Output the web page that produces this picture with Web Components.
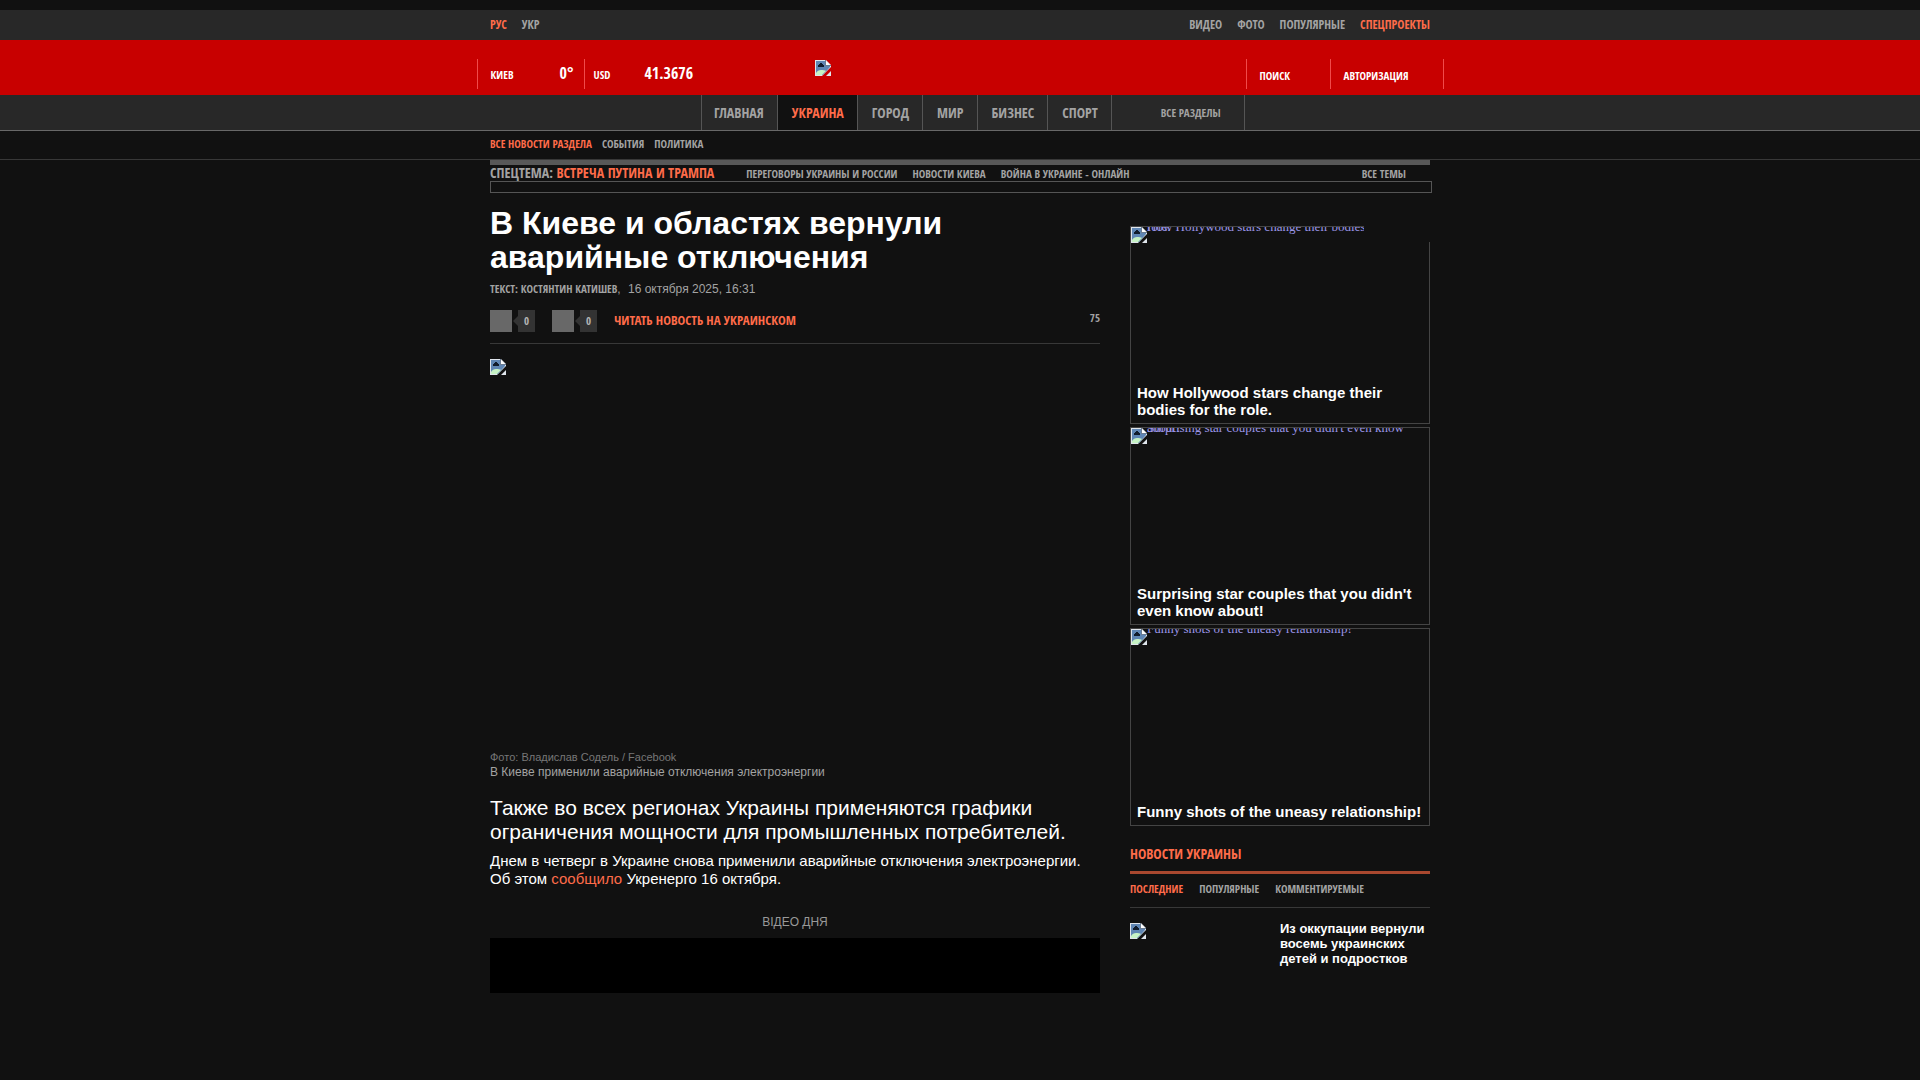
<!DOCTYPE html>
<html lang="ru">
<head>
<meta charset="utf-8">
<title>В Киеве и областях вернули аварийные отключения</title>
<style>
  html {
    --page: #111;
    --bar: #282828;
    --red: #c80000;
    --accent: #ff6c4a;
    --muted: #a3a3a3;
    --wrap: 940px;
    --narrow: "Open Sans Condensed", "OpenSans Condensed", "Noto Sans Condensed", "Liberation Sans Narrow", "Open Sans", sans-serif;
    background: var(--page);
    color: #fff;
  }
  body {
    margin: 0;
    padding-top: 10px;
    font: 15px/18px "Liberation Sans", Arial, sans-serif;
  }
  .columns {
    display: flex;
    gap: 30px;
    max-width: var(--wrap);
    margin: 0 auto;
  }
  news-article { flex: 1; }
  aside { width: 300px; padding-top: 33px; }
</style>
</head>
<body>

<!-- Broken image placeholder -->
<template id="broken-image">
  <style>
    :host { display: block; width: 16px; height: 16px; flex: none; }
    svg { display: block; }
  </style>
  <svg width="16" height="16" viewBox="0 0 16 16" aria-hidden="true">
    <path fill="#dfe5ec" d="M0 0h11l5 5v2L7 16H0z"/>
    <path fill="#5f86b4" d="M1 1h9v5h5v1l-7 8H1z"/>
    <path fill="#c6f2c4" d="M1 15v-2c1-2 3-3 5-3 2 0 4 0 5 1L7 15z"/>
    <path fill="#111c2c" d="M3 7V5h1V4h1V3h2v1h1v1h1v2z"/>
    <path fill="#fff" d="M11 1v4h4z"/>
    <path fill="#6b7c92" d="M10 0h1v5h5v1h-6z"/>
    <path fill="#dfe5ec" d="M16 11v5h-5z"/>
  </svg>
</template>

<!-- Top bar -->
<template id="top-bar">
  <style>
    :host { display: block; background: var(--bar); font: bold 12px/30px var(--narrow); }
    nav { display: flex; gap: 15px; max-width: var(--wrap); margin: 0 auto; }
    .push { margin-left: auto; }
    a { color: var(--muted); text-decoration: none; }
    .on { color: var(--accent); }
  </style>
  <nav>
    <a class="on" href="#ru">РУС</a>
    <a href="#uk">УКР</a>
    <a class="push" href="#video">ВИДЕО</a>
    <a href="#photo">ФОТО</a>
    <a href="#popular">ПОПУЛЯРНЫЕ</a>
    <a class="on" href="#special">СПЕЦПРОЕКТЫ</a>
  </nav>
</template>

<!-- Red header -->
<template id="site-header">
  <style>
    :host { display: block; background: var(--red); font: bold 11px/16px var(--narrow); }
    header {
      display: flex;
      max-width: 967px;
      height: 36px;
      margin: 0 auto;
      padding-top: 19px;
    }
    .box {
      box-sizing: border-box;
      display: flex;
      align-items: baseline;
      height: 30px;
      padding-top: 5px;
      border-left: 1px solid #f04a4a;
    }
    .weather { width: 107px; padding-left: 13px; padding-right: 10px; justify-content: space-between; }
    .rate { width: 231px; padding-left: 9px; gap: 34px; }
    .search { width: 84px; padding: 9px 0 0 13px; margin-left: auto; }
    .login { width: 114px; padding: 9px 0 0 13px; border-right: 1px solid #f04a4a; }
    b { font-size: 16px; line-height: 18px; }
    a, button { color: #fff; text-decoration: none; font: inherit; }
    button { border: 0; padding: 0; background: none; cursor: pointer; }
    .logo { padding-top: 1px; }
  </style>
  <header>
    <div class="box weather"><span>КИЕВ</span><b>0°</b></div>
    <div class="box rate"><span>USD</span><b>41.3676</b></div>
    <a class="logo" href="#home" aria-label="Главная"><broken-image></broken-image></a>
    <div class="box search"><button>ПОИСК</button></div>
    <div class="box login"><a href="#login">АВТОРИЗАЦИЯ</a></div>
  </header>
</template>

<!-- Sections -->
<template id="main-nav">
  <style>
    :host { display: block; background: var(--bar); border-bottom: 1px solid #686868; font: bold 14px/35px var(--narrow); }
    nav { display: flex; box-sizing: border-box; max-width: var(--wrap); margin: 0 auto; padding-left: 211px; }
    a { padding: 0 13px 0 14px; border-left: 1px solid #555; color: var(--muted); text-decoration: none; }
    a:first-child { padding-left: 12px; }
    .on { background: var(--page); color: var(--accent); }
    .all { padding: 0 23px 0 49px; border-right: 1px solid #555; font-size: 11px; }
  </style>
  <nav>
    <a href="#main">ГЛАВНАЯ</a>
    <a class="on" href="#ukraine">УКРАИНА</a>
    <a href="#city">ГОРОД</a>
    <a href="#world">МИР</a>
    <a href="#business">БИЗНЕС</a>
    <a href="#sport">СПОРТ</a>
    <a class="all" href="#all">ВСЕ РАЗДЕЛЫ</a>
  </nav>
</template>

<template id="sub-nav">
  <style>
    :host { display: block; padding-bottom: 2px; border-bottom: 1px solid #383838; font: bold 11px/26px var(--narrow); }
    nav { display: flex; gap: 10px; max-width: var(--wrap); margin: 0 auto; }
    a { color: var(--muted); text-decoration: none; }
    .on { color: var(--accent); }
  </style>
  <nav>
    <a class="on" href="#news">ВСЕ НОВОСТИ РАЗДЕЛА</a>
    <a href="#events">СОБЫТИЯ</a>
    <a href="#politics">ПОЛИТИКА</a>
  </nav>
</template>

<template id="topic-bar">
  <style>
    :host { display: block; max-width: var(--wrap); margin: 0 auto; font: bold 11px/18px var(--narrow); color: var(--muted); }
    nav { display: flex; gap: 15px; height: 16px; border-top: 5px solid #585858; padding-right: 24px; }
    .topic { font-size: 14px; line-height: 16px; margin-right: 17px; }
    .all { margin-left: auto; }
    a { color: inherit; text-decoration: none; }
    .topic a { color: var(--accent); }
    .frame { height: 10px; margin-right: -2px; border: 1px solid #555; }
  </style>
  <nav>
    <span class="topic">СПЕЦТЕМА: <a href="#topic">ВСТРЕЧА ПУТИНА И ТРАМПА</a></span>
    <a href="#talks">ПЕРЕГОВОРЫ УКРАИНЫ И РОССИИ</a>
    <a href="#kyiv">НОВОСТИ КИЕВА</a>
    <a href="#war">ВОЙНА В УКРАИНЕ - ОНЛАЙН</a>
    <a class="all" href="#topics">ВСЕ ТЕМЫ</a>
  </nav>
  <div class="frame"></div>
</template>

<!-- Share button with a counter -->
<template id="share-button">
  <style>
    :host { display: flex; align-items: center; width: 45px; height: 22px; font: bold 11px/22px var(--narrow); }
    button { width: 22px; height: 22px; border: 0; padding: 0; background: #686868; cursor: pointer; }
    i { margin-left: 1px; border: 5px solid transparent; border-left: 0; border-right-color: #333; }
    span { flex: 1; background: #333; color: #b5b5b5; text-align: center; }
  </style>
  <button aria-label="Поделиться"></button><i></i><span><slot></slot></span>
</template>

<template id="news-article">
  <style>
    :host { display: block; min-width: 0; }
    h1 { margin: 0; padding-top: 13px; font-size: 32px; line-height: 34px; max-width: 500px; }
    .byline { margin-top: 6px; font-size: 12px; line-height: 18px; color: var(--muted); }
    .byline b { font: bold 11px/18px var(--narrow); }
    .byline time { margin-left: 4px; }
    .share { display: flex; gap: 17px; height: 22px; margin-top: 12px; padding-bottom: 11px; border-bottom: 1px solid #383838; }
    .share a { font: bold 13px/20px var(--narrow); }
    .share .views { margin-left: auto; font: bold 11px/16px var(--narrow); color: var(--muted); }
    a { color: var(--accent); text-decoration: none; }
    figure { margin: 15px 0 0; }
    .photo { height: 391px; }
    figcaption { font-size: 12px; line-height: 15px; color: var(--muted); }
    small { display: block; font-size: 11px; line-height: 15px; color: #777; }
    h2 { margin: 16px 0 8px; font-size: 21px; line-height: 24px; font-weight: normal; }
    p { margin: 0; }
    .label { margin-top: 25px; font-size: 12px; color: #999; text-align: center; }
    .video { height: 55px; margin-top: 7px; background: #000; }
  </style>
  <h1><slot name="title"></slot></h1>
  <div class="byline"><b>ТЕКСТ: <slot name="author"></slot></b>, <time datetime="2025-10-16T16:31"><slot name="date"></slot></time></div>
  <div class="share">
    <share-button>0</share-button>
    <share-button>0</share-button>
    <a href="#uk">ЧИТАТЬ НОВОСТЬ НА УКРАИНСКОМ</a>
    <span class="views">75</span>
  </div>
  <figure>
    <div class="photo"><broken-image></broken-image></div>
    <figcaption><small><slot name="credit"></slot></small><slot name="caption"></slot></figcaption>
  </figure>
  <h2><slot name="lead"></slot></h2>
  <p>Днем в четверг в Украине снова применили аварийные отключения электроэнергии. Об этом <a href="#source">сообщило</a> Укренерго 16 октября.</p>
  <div class="label">ВІДЕО ДНЯ</div>
  <div class="video"></div>
</template>

<!-- Promo card: the picture is missing, its alt text is cut by the frame -->
<template id="promo-card">
  <style>
    :host { display: block; position: relative; margin-bottom: 3px; }
    a {
      display: flex;
      flex-direction: column;
      justify-content: space-between;
      box-sizing: border-box;
      height: 198px;
      border: 1px solid #444;
      color: #9c96e8;
      text-decoration: none;
    }
    .pic { display: flex; height: 16px; overflow: hidden; }
    .alt { font: 13px/0 "Liberation Serif", serif; }
    .title { padding: 0 6px 5px; font: bold 15px/17px "Liberation Sans", Arial, sans-serif; color: #fff; }
    :host([cut])::after {
      content: "";
      position: absolute;
      top: 0;
      right: 0;
      width: 66px;
      height: 16px;
      background: var(--page);
    }
  </style>
  <a href="#promo">
    <span class="pic"><broken-image></broken-image><span class="alt"></span></span>
    <span class="title"><slot></slot></span>
  </a>
</template>

<template id="news-feed">
  <style>
    :host { display: block; }
    h3 { margin: 0; padding: 15px 0 7px; border-bottom: 3px solid #a9482f; font: bold 14px/20px var(--narrow); color: var(--accent); }
    nav { display: flex; gap: 16px; padding-bottom: 3px; border-bottom: 1px solid #383838; font: bold 11px/30px var(--narrow); }
    a { color: var(--muted); text-decoration: none; }
    .on { color: var(--accent); }
    .item { display: flex; margin-top: 15px; font-weight: bold; font-size: 13px; line-height: 15px; color: #fff; }
    .pic { flex: none; width: 150px; }
    .text { margin-top: -2px; }
  </style>
  <h3>НОВОСТИ УКРАИНЫ</h3>
  <nav>
    <a class="on" href="#last">ПОСЛЕДНИЕ</a>
    <a href="#top">ПОПУЛЯРНЫЕ</a>
    <a href="#commented">КОММЕНТИРУЕМЫЕ</a>
  </nav>
  <a class="item" href="#item">
    <span class="pic"><broken-image></broken-image></span>
    <span class="text"><slot></slot></span>
  </a>
</template>

<top-bar></top-bar>
<site-header></site-header>
<main-nav></main-nav>
<sub-nav></sub-nav>
<topic-bar></topic-bar>
<div class="columns">
  <news-article>
    <span slot="title">В Киеве и областях вернули аварийные отключения</span>
    <span slot="author">КОСТЯНТИН КАТИШЕВ</span>
    <span slot="date">16 октября 2025, 16:31</span>
    <span slot="credit">Фото: Владислав Содель / Facebook</span>
    <span slot="caption">В Киеве применили аварийные отключения электроэнергии</span>
    <span slot="lead">Также во всех регионах Украины применяются графики ограничения мощности для промышленных потребителей.</span>
  </news-article>
  <aside>
    <promo-card cut>How Hollywood stars change their bodies for the role.</promo-card>
    <promo-card>Surprising star couples that you didn't even know about!</promo-card>
    <promo-card>Funny shots of the uneasy relationship!</promo-card>
    <news-feed>Из оккупации вернули восемь украинских детей и подростков</news-feed>
  </aside>
</div>

<script>
class TemplateElement extends HTMLElement {
  constructor() {
    super();
    let template = document.getElementById(this.localName);
    this.attachShadow({mode: 'open'}).appendChild(document.importNode(template.content, true));
  }
}

class PromoCard extends TemplateElement {
  connectedCallback() {
    this.shadowRoot.querySelector('.alt').textContent = this.textContent;
  }
}

customElements.define('promo-card', PromoCard);

['broken-image', 'share-button', 'top-bar', 'site-header', 'main-nav', 'sub-nav',
  'topic-bar', 'news-article', 'news-feed'].forEach(function (name) {
  customElements.define(name, class extends TemplateElement {});
});
</script>
</body>
</html>
